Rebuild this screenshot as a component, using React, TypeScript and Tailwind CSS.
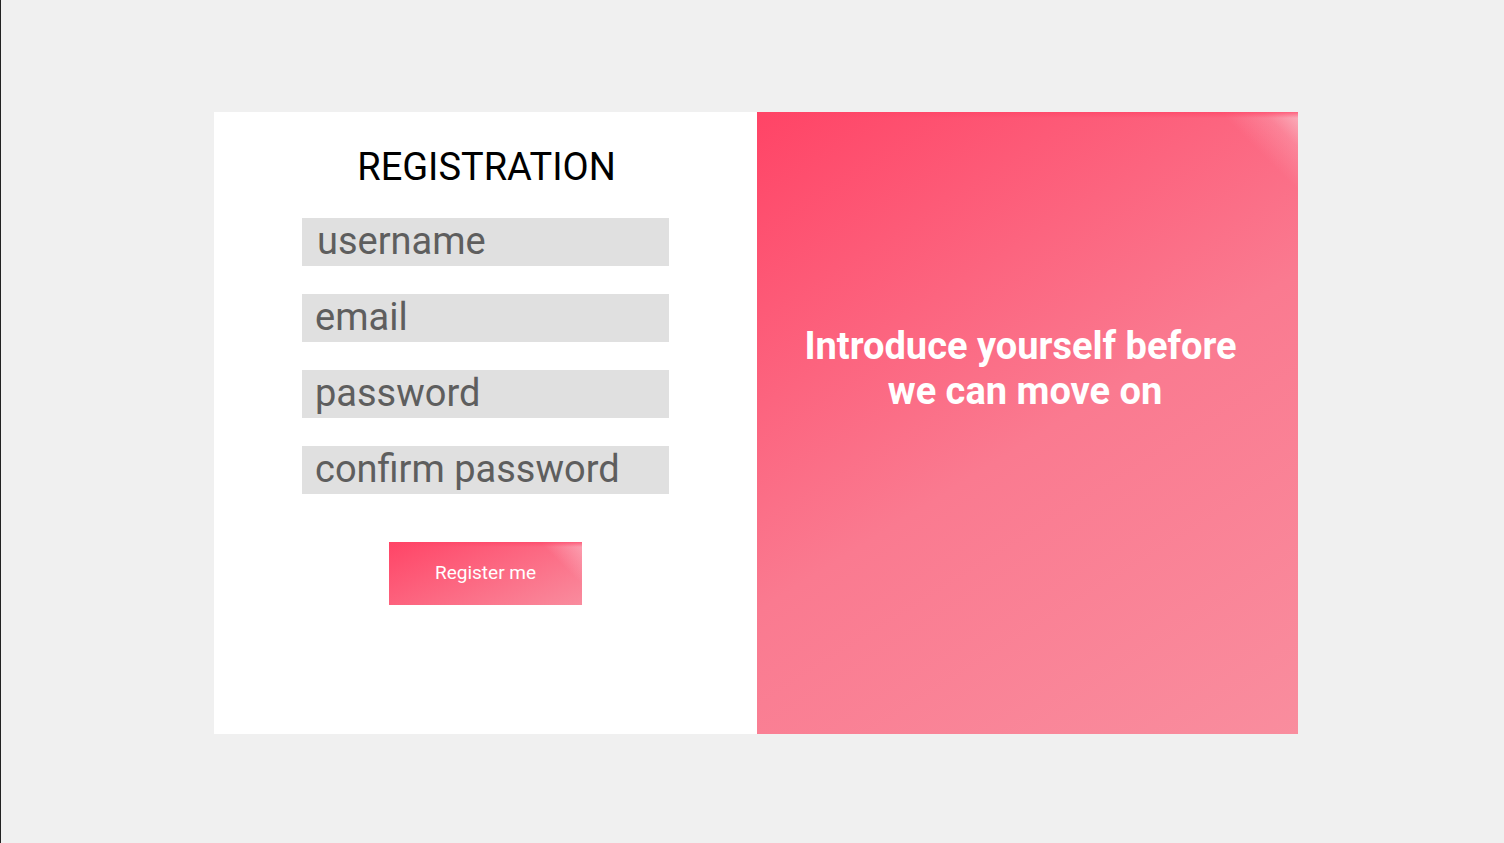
export default function App() {
  const fields = ["username", "email", "password", "confirm password"];
  return (
    <div className="w-[1504px] h-[843px] bg-[#f0f0f0] border-l border-[#222] flex items-start pl-[213px] pt-[112px]" style={{ fontFamily: "Roboto, 'Liberation Sans', sans-serif" }}>
      <div className="flex w-[1084px] h-[622px]">
        <div className="w-[543px] h-full bg-white flex flex-col items-center pt-[36px]">
          <h1 className="text-[38px] leading-none text-black h-[70px] ml-[2px]">REGISTRATION</h1>
          <div className="flex flex-col gap-[28px]">
            {fields.map((f, i) => (
              <div key={f} className={`w-[367px] h-[48px] bg-[#e0e0e0] flex items-center text-[38px] leading-none text-[#5e5e5e] ${i === 0 ? "pl-[15px]" : "pl-[13px]"}`}>
                <span className="mt-[-2px]">{f}</span>
              </div>
            ))}
          </div>
          <button className="mt-[48px] w-[193px] h-[63px] text-white text-[19px] bg-[linear-gradient(to_bottom,rgba(255,68,102,0.7)_0px,rgba(255,68,102,0)_5px),linear-gradient(225deg,rgba(252,185,198,0.7)_0px,rgba(255,255,255,0)_30px),linear-gradient(155deg,#ff4466_0%,#f98c9e_100%)]">
            Register me
          </button>
        </div>
        <div className="w-[541px] h-full flex flex-col items-center pt-[212px] bg-[linear-gradient(to_bottom,rgba(255,68,102,0.7)_0px,rgba(255,68,102,0)_6px),linear-gradient(225deg,rgba(250,190,200,0.85)_0px,rgba(250,190,200,0.3)_25px,rgba(255,255,255,0)_55px),linear-gradient(148deg,#ff4466_0%,#fa7a90_52%,#f98d9e_100%)]">
          <p className="text-white font-bold text-[38px] leading-[45px] text-center mr-[14px]">
            <span className="block">Introduce yourself before</span>
            <span className="block pl-[9px]">we can move on</span>
          </p>
        </div>
      </div>
    </div>
  );
}
